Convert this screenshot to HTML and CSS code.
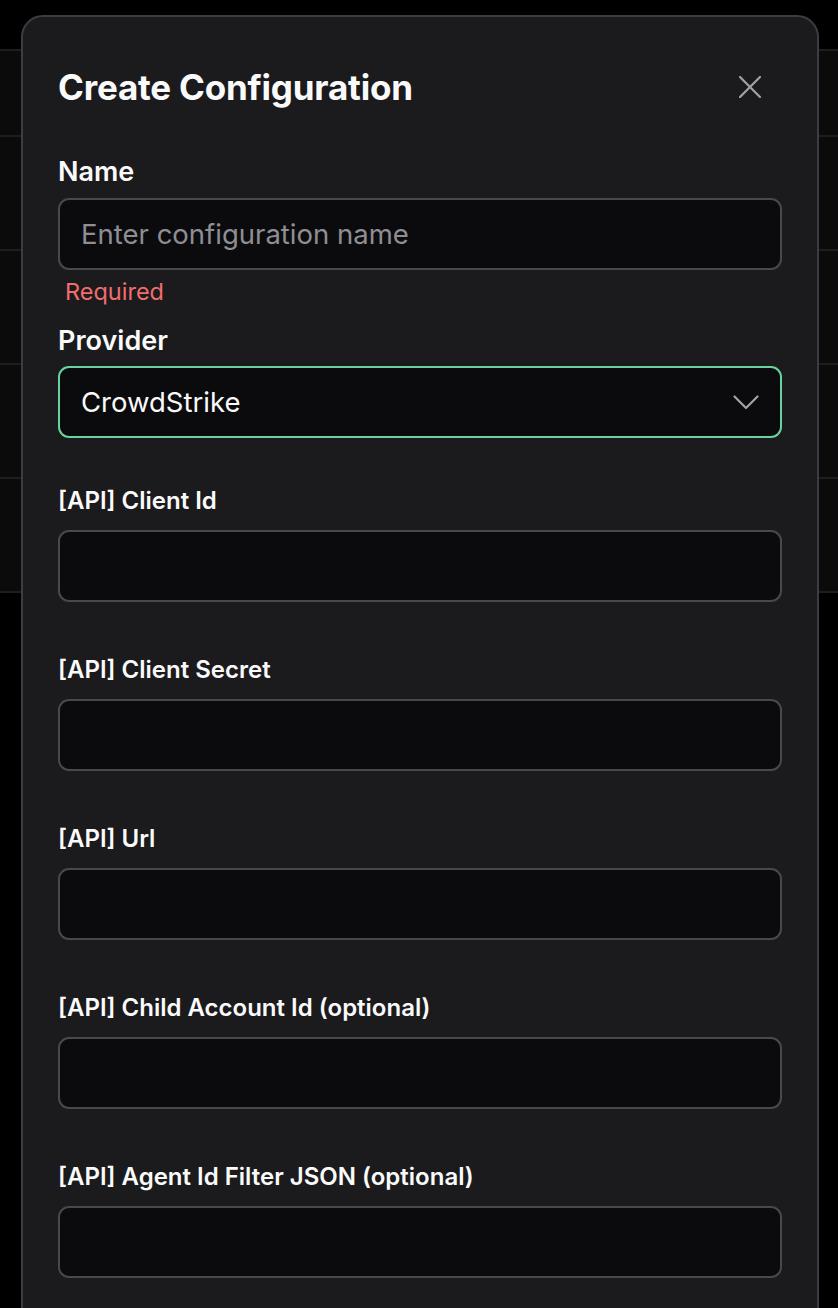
FILE: index.html
```html
<!DOCTYPE html>
<html lang="en">
<head>
<meta charset="utf-8">
<title>Create Configuration</title>
<link rel="stylesheet" href="styles.css">
</head>
<body>
<div class="backdrop">
  <div class="table">
    <div class="row head"></div>
    <div class="row"></div>
    <div class="row"></div>
    <div class="row"></div>
    <div class="row"></div>
  </div>
</div>

<div class="modal">
  <div class="modal-header">
    <h2 class="title">Create Configuration</h2>
    <button class="close" aria-label="Close">
      <svg width="22" height="22" viewBox="0 0 22 22" fill="none" stroke="currentColor" stroke-width="2.2" stroke-linecap="round"><path d="M1 1 L21 21 M21 1 L1 21"/></svg>
    </button>
  </div>

  <div class="field main">
    <label class="label-lg">Name</label>
    <input class="input" type="text" placeholder="Enter configuration name">
    <div class="error">Required</div>
  </div>

  <div class="field main provider">
    <label class="label-lg">Provider</label>
    <div class="select">
      <span>CrowdStrike</span>
      <svg width="26" height="15" viewBox="0 0 26 15" fill="none" stroke="currentColor" stroke-width="2.2" stroke-linecap="round" stroke-linejoin="round"><path d="M1.5 1.5 L13 13 L24.5 1.5"/></svg>
    </div>
  </div>

  <div class="field api first">
    <label class="label">[API] Client Id</label>
    <input class="input" type="text">
  </div>
  <div class="field api">
    <label class="label">[API] Client Secret</label>
    <input class="input" type="text">
  </div>
  <div class="field api">
    <label class="label">[API] Url</label>
    <input class="input" type="text">
  </div>
  <div class="field api">
    <label class="label">[API] Child Account Id (optional)</label>
    <input class="input" type="text">
  </div>
  <div class="field api">
    <label class="label">[API] Agent Id Filter JSON (optional)</label>
    <input class="input" type="text">
  </div>
</div>
</body>
</html>
```

FILE: styles.css
```css
* { box-sizing: border-box; }
html, body {
  margin: 0;
  padding: 0;
  background: #000;
  height: 1308px;
  overflow: hidden;
  font-family: Inter, "Noto Sans", sans-serif;
}

.backdrop {
  padding-top: 49px;
}
.table {
  background: #0b0b0b;
  border-top: 2px solid #1e1e1e;
}
.row {
  height: 114px;
  border-bottom: 2px solid #1e1e1e;
}
.row.head { height: 86px; }

.modal {
  position: absolute;
  left: 21px;
  top: 15px;
  width: 798px;
  height: 1400px;
  background: #1b1b1d;
  border: 2px solid #3c3c42;
  border-radius: 22px;
  padding: 34px 35px;
  color: #fafafa;
}

.modal-header {
  display: flex;
  align-items: center;
  justify-content: space-between;
  height: 72px;
}
.title {
  margin: 0;
  font-size: 35px;
  font-weight: 700;
  letter-spacing: -0.2px;
}
.close {
  background: none;
  border: none;
  padding: 0;
  margin-right: 21px;
  color: #a1a1aa;
  display: flex;
}

.field {
  display: flex;
  flex-direction: column;
}
.field.main { margin-top: 32px; }
.field.provider { margin-top: 17px; }
.field.api { margin-top: 53px; }
.field.api.first { margin-top: 48px; }

.label-lg {
  font-size: 27px;
  font-weight: 600;
  line-height: 34px;
  margin-bottom: 9px;
}
.field.provider .label-lg { margin-bottom: 8px; }
.label {
  font-size: 24px;
  font-weight: 600;
  line-height: 30px;
  margin-bottom: 14px;
}

.input {
  height: 72px;
  width: 100%;
  background: #0b0b0d;
  border: 2px solid #48484f;
  border-radius: 11px;
  padding: 0 21px;
  font-family: Inter, "Noto Sans", sans-serif;
  font-size: 27.5px;
  color: #fafafa;
  outline: none;
}
.input::placeholder { color: #8e8e95; }

.error {
  margin-top: 7px;
  padding-left: 7px;
  font-size: 23.5px;
  line-height: 30px;
  color: #f26d6d;
}

.select {
  height: 72px;
  background: #0b0b0d;
  border: 2px solid #69d39d;
  border-radius: 11px;
  padding: 0 21px 0 21px;
  display: flex;
  align-items: center;
  justify-content: space-between;
  font-size: 27.5px;
  color: #fafafa;
}
.select svg { color: #a1a1aa; }
```
